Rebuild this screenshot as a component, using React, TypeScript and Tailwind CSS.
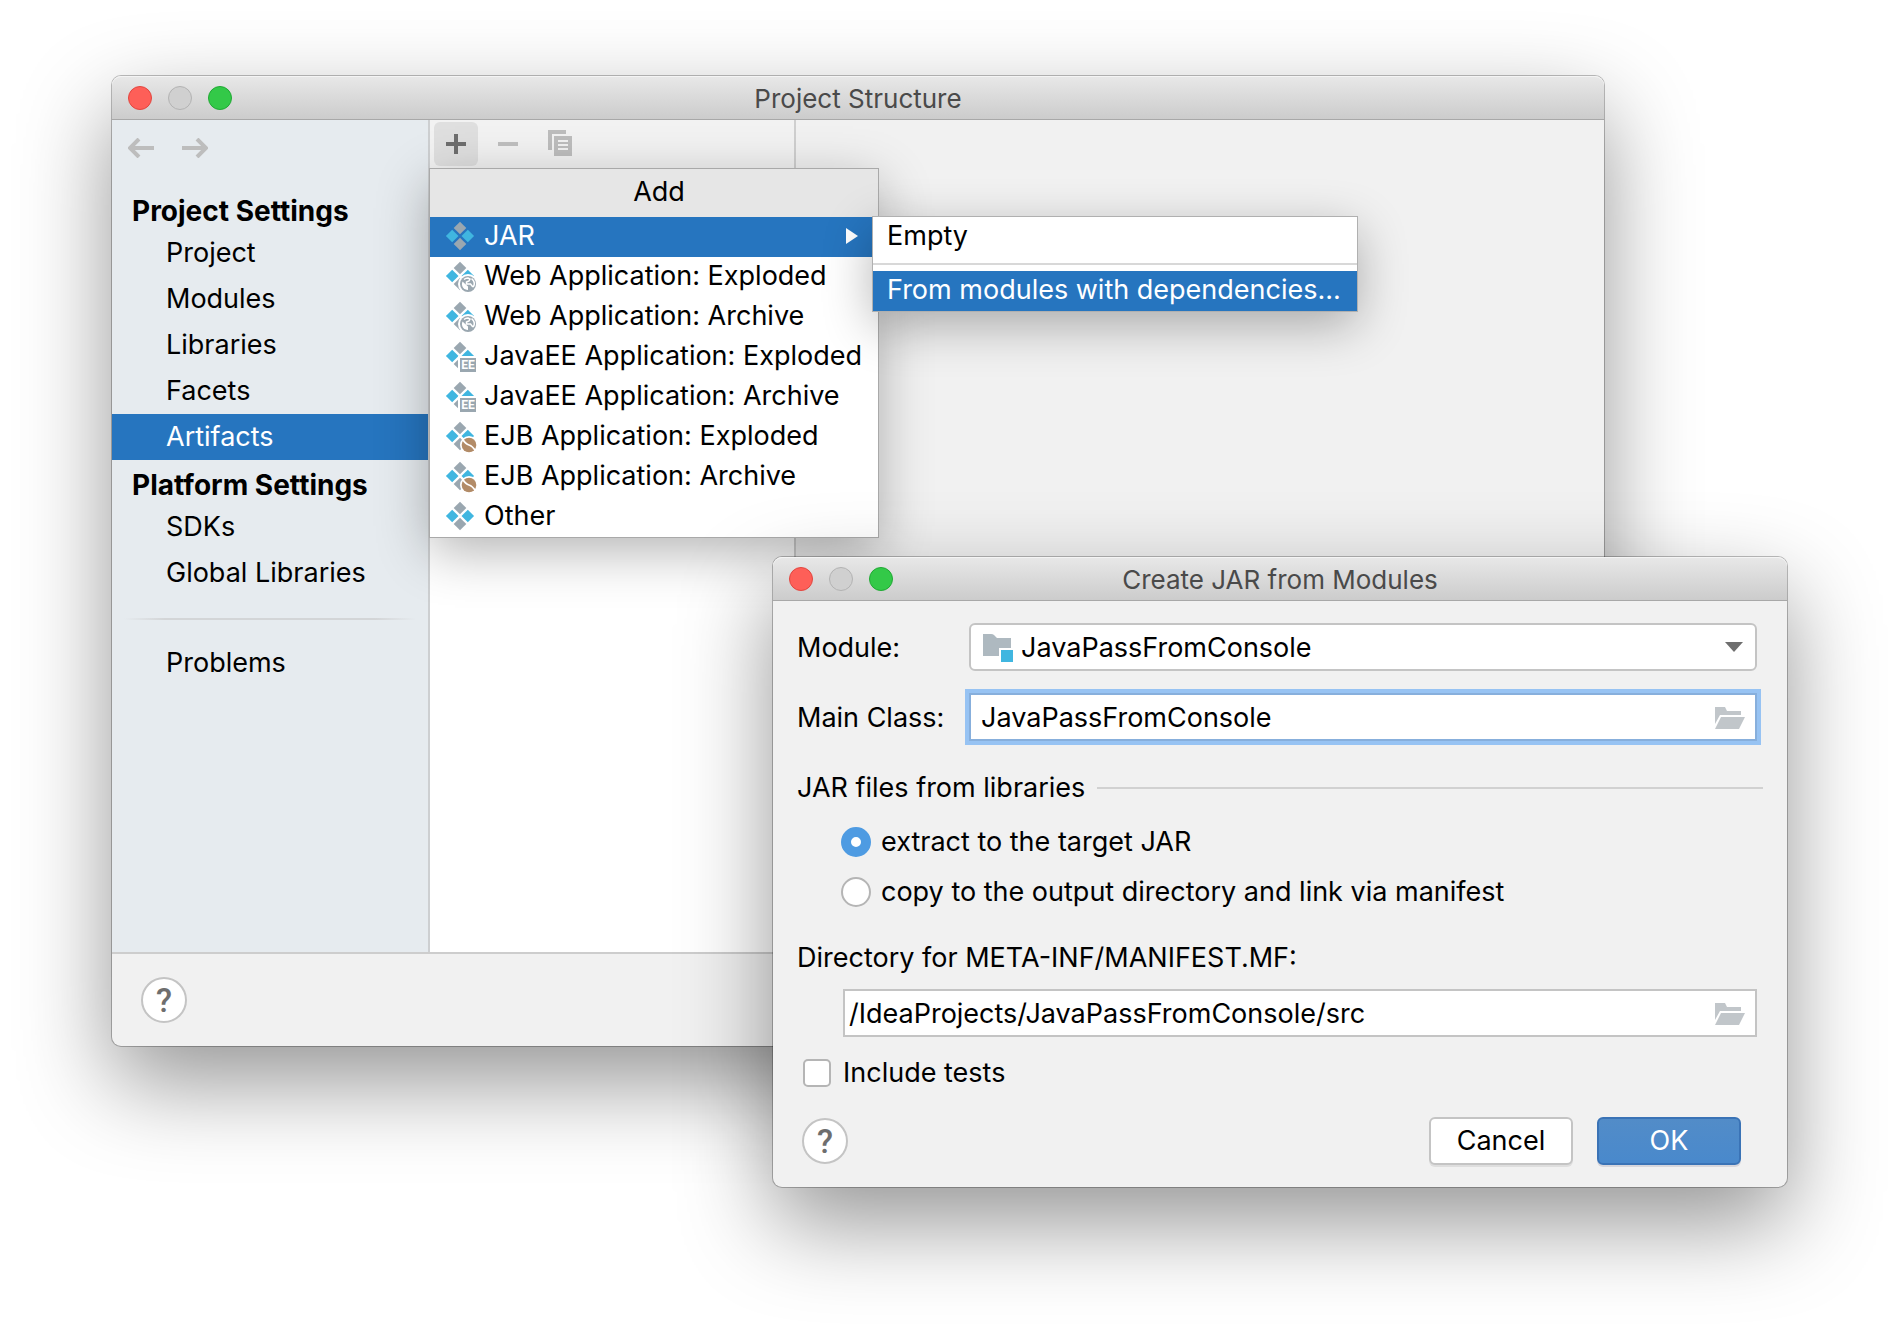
import type { ReactNode } from 'react';

const GREY = '#9aa7b0';
const BLUE = '#40b6e0';

type Badge = 'none' | 'web' | 'ee' | 'ejb';

function ArtifactIcon({ badge }: { badge: Badge }) {
  return (
    <svg width="32" height="32" viewBox="0 0 32 32" className="shrink-0 overflow-visible" aria-hidden="true">
      <path d="M16 1.7l6.3 6.3-6.3 6.3L9.700 8z" fill={GREY} />
      <path d="M8.200 9.700l6.300 6.300-6.300 6.300L1.900 16z" fill={BLUE} />
      <path d="M23.800 9.700l6.300 6.300-6.300 6.300-6.300-6.300z" fill={BLUE} />
      <path d="M16 17.700l6.300 6.300-6.300 6.300L9.700 24z" fill={GREY} />
      {badge === 'web' && (
        <>
          <circle cx="24" cy="24" r="10" fill="#fff" />
          <circle cx="24" cy="24" r="8" fill={GREY} />
          <path d="M18.500 21.500l5.500 5v3.500a6 6 0 0 1-5.500-8.500z" fill="#fff" />
          <path d="M20 19.500a6 6 0 0 1 4-1.500l2 1-1 2-2.500 1v2h4l2 2.500h1a6 6 0 0 0-1-7l-1-.8" fill="none" stroke="#fff" strokeWidth="1.500" />
        </>
      )}
      {badge === 'ee' && (
        <>
          <path d="M14 16h18v16H14z" fill="#fff" />
          <path d="M16 18h16v14H16z" fill={GREY} />
          <text
            x="24"
            y="29"
            textAnchor="middle"
            fontFamily="Roboto, sans-serif"
            fontWeight="700"
            fontSize="12"
            fill="#fff"
          >
            EE
          </text>
        </>
      )}
      {badge === 'ejb' && (
        <>
          <circle cx="25" cy="25" r="9" fill="#fff" />
          <circle cx="25" cy="25" r="7.300" fill="#b28b67" />
          <path d="M18.500 19q3 5 6.500 6t6.500 6" stroke="#fff" strokeWidth="1.800" fill="none" />
        </>
      )}
    </svg>
  );
}

function OpenFolderIcon() {
  return (
    <svg width="30" height="22" viewBox="0 0 30 22" fill="#c1c6ca" aria-hidden="true">
      <path d="M0 0h10l2 4h14v4H5L0 17z" />
      <path d="M6 10h24l-6 12H0z" />
    </svg>
  );
}

function ModuleIcon() {
  return (
    <svg width="30" height="28" viewBox="0 0 30 28" aria-hidden="true">
      <path d="M0 0h8q2 0 3 1l3 3h14v10H16v8H0z" fill="#aeb9c0" />
      <path d="M18 16h12v12H18z" fill={BLUE} />
    </svg>
  );
}

function TitleBar({ title }: { title: string }) {
  return (
    <header className="relative flex h-11 items-center gap-4 rounded-t-[9px] border-b border-[#a8a8a8] bg-linear-to-b from-[#e8e8e8] to-[#cccccc] px-4 shadow-[inset_0_1px_0_#f4f4f4]">
      <button type="button" aria-label="Close" className="size-6 rounded-full border border-[#e2463f] bg-[#fe5f58]" />
      <button type="button" aria-label="Minimize" className="size-6 rounded-full border border-[#b3b3b3] bg-[#d0d0d0]" />
      <button type="button" aria-label="Zoom" className="size-6 rounded-full border border-[#20a934] bg-[#33c948]" />
      <h1 className="pointer-events-none absolute inset-x-0 pt-[2px] text-center text-[26px] leading-8 text-[#4a4a4a]">
        {title}
      </h1>
    </header>
  );
}

function HelpButton() {
  return (
    <button
      type="button"
      aria-label="Help"
      className="flex size-[46px] items-center justify-center rounded-full border-2 border-[#c4c4c4] bg-white font-[Roboto,sans-serif] text-[33px] leading-none font-medium text-[#6e6e6e]"
    >
      ?
    </button>
  );
}

function NavItem({ label, active = false }: { label: string; active?: boolean }) {
  return (
    <li>
      <a
        href="#"
        aria-current={active ? 'page' : undefined}
        className={
          active
            ? 'flex h-[46px] items-center bg-[#2675bf] pl-[54px] text-white'
            : 'flex h-[46px] items-center pl-[54px]'
        }
      >
        {label}
      </a>
    </li>
  );
}

function NavHeading({ children }: { children: ReactNode }) {
  return <h2 className="flex h-11 items-center pt-[6px] pl-5 text-[28px] font-bold">{children}</h2>;
}

function Sidebar() {
  return (
    <nav className="w-[318px] shrink-0 border-r-2 border-[#cdcfd1] bg-[#e6ebef]">
      <div className="mb-[10px] flex h-14 items-center gap-7 pl-4">
        <button type="button" aria-label="Back">
          <svg width="26" height="20" viewBox="0 0 26 20" fill="none" stroke="#bdbdbd" strokeWidth="4" aria-hidden="true">
            <path d="M26 10H3M11 1L2 10l9 9" />
          </svg>
        </button>
        <button type="button" aria-label="Forward">
          <svg width="26" height="20" viewBox="0 0 26 20" fill="none" stroke="#bdbdbd" strokeWidth="4" aria-hidden="true">
            <path d="M0 10h23M15 1l9 9-9 9" />
          </svg>
        </button>
      </div>
      <NavHeading>Project Settings</NavHeading>
      <ul>
        <NavItem label="Project" />
        <NavItem label="Modules" />
        <NavItem label="Libraries" />
        <NavItem label="Facets" />
        <NavItem label="Artifacts" active />
      </ul>
      <NavHeading>Platform Settings</NavHeading>
      <ul>
        <NavItem label="SDKs" />
        <NavItem label="Global Libraries" />
      </ul>
      <div className="mx-3 mt-[22px] mb-5 h-[2px] bg-[linear-gradient(to_right,transparent,#d3d5d7_14%,#d3d5d7_86%,transparent)]" />
      <ul>
        <NavItem label="Problems" />
      </ul>
    </nav>
  );
}

const MENU: { label: string; badge: Badge }[] = [
  { label: 'Web Application: Exploded', badge: 'web' },
  { label: 'Web Application: Archive', badge: 'web' },
  { label: 'JavaEE Application: Exploded', badge: 'ee' },
  { label: 'JavaEE Application: Archive', badge: 'ee' },
  { label: 'EJB Application: Exploded', badge: 'ejb' },
  { label: 'EJB Application: Archive', badge: 'ejb' },
  { label: 'Other', badge: 'none' },
];

function AddMenu() {
  return (
    <div
      role="menu"
      aria-label="Add"
      className="absolute top-[49px] left-0 z-10 w-[448px] bg-white whitespace-nowrap shadow-[0_0_0_1px_#a9a9a9,0_14px_50px_rgba(0,0,0,0.3)]"
    >
      <div className="flex h-12 items-center justify-center bg-[#e6e6e6] pb-[2px] pl-[10px]">Add</div>
      <div className="relative">
        <button
          type="button"
          role="menuitem"
          aria-haspopup="true"
          className="flex h-10 w-full items-center gap-2 bg-[#2675bf] pr-5 pb-[2px] pl-[14px] text-white"
        >
          <ArtifactIcon badge="none" />
          <span className="flex-1 text-left">JAR</span>
          <svg width="12" height="16" viewBox="0 0 12 16" fill="#fff" aria-hidden="true">
            <path d="M0 0l12 8-12 8z" />
          </svg>
        </button>
        <div
          role="menu"
          aria-label="JAR"
          className="absolute top-0 left-[443px] w-[484px] bg-white shadow-[0_0_0_1px_#b0b0b0,0_14px_50px_rgba(0,0,0,0.3)]"
        >
          <button type="button" role="menuitem" className="flex h-10 w-full items-center pb-[2px] pl-[14px]">
            Empty
          </button>
          <div className="my-[6px] h-[2px] bg-[#d8d8d8]" />
          <button
            type="button"
            role="menuitem"
            className="flex h-10 w-full items-center bg-[#2675bf] pb-[2px] pl-[14px] text-white"
          >
            From modules with dependencies...
          </button>
        </div>
      </div>
      {MENU.map((item) => (
        <button
          key={item.label}
          type="button"
          role="menuitem"
          className="flex h-10 w-full items-center gap-2 pb-[2px] pl-[14px]"
        >
          <ArtifactIcon badge={item.badge} />
          {item.label}
        </button>
      ))}
    </div>
  );
}

function ProjectStructure() {
  return (
    <section className="absolute top-[76px] right-[298px] left-[112px] rounded-[9px] bg-[#f1f1f1] shadow-[0_0_0_1px_rgba(0,0,0,0.25),0_36px_92px_rgba(0,0,0,0.42)]">
      <TitleBar title="Project Structure" />
      <div className="flex min-h-[832px]">
        <Sidebar />
        <div className="relative flex w-[364px] shrink-0 flex-col">
          <div className="flex h-12 items-center gap-2 bg-[#f2f2f2] pl-1">
            <button type="button" aria-label="Add" className="flex size-11 items-center justify-center rounded-md bg-[#dfdfdf]">
              <svg width="20" height="20" viewBox="0 0 20 20" fill="#6e6e6e" aria-hidden="true">
                <path d="M8 0h4v8h8v4h-8v8H8v-8H0V8h8z" />
              </svg>
            </button>
            <button type="button" aria-label="Remove" className="flex size-11 items-center justify-center">
              <svg width="20" height="4" viewBox="0 0 20 4" fill="#bfbfbf" aria-hidden="true">
                <path d="M0 0h20v4H0z" />
              </svg>
            </button>
            <button type="button" aria-label="Copy" className="flex size-11 items-center justify-center pb-[2px]">
              <svg width="24" height="26" viewBox="0 0 24 26" fill="#bdbdbd" aria-hidden="true">
                <path d="M0 0h18v4H4v16H0z" />
                <path d="M6 6h18v20H6z" />
                <path d="M10 10h10v2H10zM10 14h10v2H10zM10 18h10v2H10z" fill="#f2f2f2" />
              </svg>
            </button>
          </div>
          <div className="flex-1 bg-white" />
          <AddMenu />
        </div>
        <div className="flex-1 border-l-2 border-[#cfcfcf]" />
      </div>
      <footer className="border-t-2 border-[#cdcdcd] px-[29px] py-[23px]">
        <HelpButton />
      </footer>
    </section>
  );
}

function CreateJar() {
  return (
    <section className="absolute top-[557px] right-[115px] left-[773px] z-20 rounded-[9px] bg-[#f1f1f1] shadow-[0_0_0_1px_rgba(0,0,0,0.25),0_36px_92px_rgba(0,0,0,0.42)]">
      <TitleBar title="Create JAR from Modules" />
      <form className="pt-[22px] pr-[30px] pb-[22px] pl-6" onSubmit={(e) => e.preventDefault()}>
        <div className="flex items-center">
          <label htmlFor="module" className="w-[172px] pt-[2px]">
            Module:
          </label>
          <div className="relative flex-1">
            <select
              id="module"
              className="h-12 w-full appearance-none rounded-md border-2 border-[#c4c4c4] bg-white pt-[2px] pl-[50px]"
            >
              <option>JavaPassFromConsole</option>
            </select>
            <span className="pointer-events-none absolute inset-y-0 left-[14px] flex items-center pt-[2px]">
              <ModuleIcon />
            </span>
            <span className="pointer-events-none absolute inset-y-0 right-[14px] flex items-center">
              <svg width="18" height="10" viewBox="0 0 18 10" fill="#6e6e6e" aria-hidden="true">
                <path d="M0 0h18l-9 10z" />
              </svg>
            </span>
          </div>
        </div>

        <div className="mt-[22px] flex items-center">
          <label htmlFor="main-class" className="w-[172px] pt-[2px]">
            Main Class:
          </label>
          <div className="relative flex-1">
            <input
              id="main-class"
              type="text"
              defaultValue="JavaPassFromConsole"
              className="h-12 w-full border-2 border-[#87afdc] bg-white pr-12 pl-[10px] ring-4 ring-[#97c3f3] outline-none"
            />
            <button type="button" aria-label="Browse main class" className="absolute inset-y-0 right-3 flex items-center pt-[2px]">
              <OpenFolderIcon />
            </button>
          </div>
        </div>

        <fieldset className="mt-[27px]">
          <legend className="flex h-10 w-full items-center">
            JAR files from libraries
            <span className="-mr-[6px] ml-3 h-[2px] flex-1 bg-[#d1d1d1]" />
          </legend>
          <div className="pt-[9px] pl-11">
            <label className="flex h-[50px] items-center gap-[10px]">
              <input
                type="radio"
                name="libraries"
                defaultChecked
                className="size-[30px] appearance-none rounded-full border-2 border-[#b5b5b5] bg-white checked:border-[10px] checked:border-[#4e9be2]"
              />
              extract to the target JAR
            </label>
            <label className="flex h-[50px] items-center gap-[10px]">
              <input
                type="radio"
                name="libraries"
                className="size-[30px] appearance-none rounded-full border-2 border-[#b5b5b5] bg-white checked:border-[10px] checked:border-[#4e9be2]"
              />
              copy to the output directory and link via manifest
            </label>
          </div>
        </fieldset>

        <label htmlFor="manifest-dir" className="mt-[21px] flex h-10 items-center">
          Directory for META-INF/MANIFEST.MF:
        </label>
        <div className="relative mt-[11px] ml-[46px]">
          <input
            id="manifest-dir"
            type="text"
            defaultValue="/IdeaProjects/JavaPassFromConsole/src"
            className="h-12 w-full border-2 border-[#c4c4c4] bg-white pr-12 pl-1 outline-none"
          />
          <button type="button" aria-label="Browse directory" className="absolute inset-y-0 right-3 flex items-center pt-[2px]">
            <OpenFolderIcon />
          </button>
        </div>

        <label className="mt-4 flex h-10 items-center gap-3 pl-[6px]">
          <input
            type="checkbox"
            className="size-7 appearance-none rounded-[5px] border-2 border-[#b5b5b5] bg-white checked:bg-[#4e9be2]"
          />
          Include tests
        </label>

        <div className="mt-6 flex items-center gap-6 pr-4 pl-[5px]">
          <HelpButton />
          <button
            type="button"
            className="ml-auto h-12 w-36 rounded-md border-2 border-[#c4c4c4] bg-white shadow-[0_2px_0_#dedede]"
          >
            Cancel
          </button>
          <button
            type="submit"
            className="h-12 w-36 rounded-md border-2 border-[#3a73b6] bg-linear-to-b from-[#528cc8] to-[#4989cc] text-white shadow-[0_2px_0_#d6d6dc]"
          >
            OK
          </button>
        </div>
      </form>
    </section>
  );
}

export default function App() {
  return (
    <main className="relative min-h-screen overflow-hidden bg-white font-[Inter,'Liberation_Sans',sans-serif] text-[27px] leading-8 text-black">
      <ProjectStructure />
      <CreateJar />
    </main>
  );
}
